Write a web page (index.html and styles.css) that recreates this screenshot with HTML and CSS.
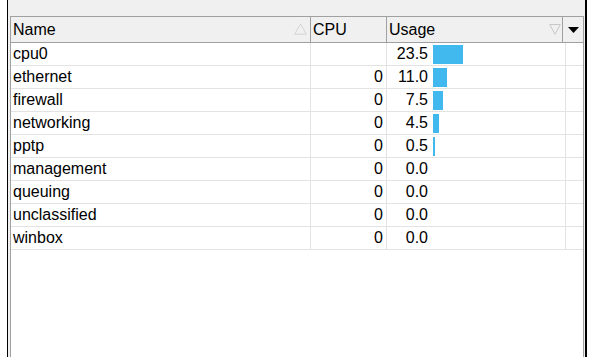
FILE: index.html
```html
<!DOCTYPE html>
<html lang="en">
<head>
  <meta charset="UTF-8">
  <title>Profile</title>
  <link rel="stylesheet" href="styles.css">
</head>
<body>
  <div class="frame">
    <div class="grid">
      <div class="head">
        <div class="hcell name">Name
          <svg class="sort" width="13" height="12" viewBox="0 0 13 12"><path d="M6.5 0.8 L12.3 11.2 L0.7 11.2 Z" fill="none" stroke="#d4d4d4"/></svg>
        </div>
        <div class="hcell">CPU</div>
        <div class="hcell usage">Usage
          <svg class="sort" width="12" height="11" viewBox="0 0 12 11"><path d="M0.7 0.5 L11.3 0.5 L6 10.3 Z" fill="none" stroke="#c8c8c8"/></svg>
        </div>
        <div class="hcell menu">
          <svg width="11" height="6" viewBox="0 0 11 6"><path d="M0 0 L11 0 L5.5 6 Z" fill="#000"/></svg>
        </div>
      </div>

      <div class="rows" id="rows"></div>
    </div>
  </div>

  <script>
    const data = [
      ["cpu0", "", 23.5],
      ["ethernet", "0", 11.0],
      ["firewall", "0", 7.5],
      ["networking", "0", 4.5],
      ["pptp", "0", 0.5],
      ["management", "0", 0.0],
      ["queuing", "0", 0.0],
      ["unclassified", "0", 0.0],
      ["winbox", "0", 0.0]
    ];

    let html = "";
    data.forEach(function (r) {
      let w = Math.round(r[2] * 1.27);
      if (r[2] > 0 && w < 2) w = 2;
      html += "<div class='row'>";
      html += "<div class='cell name'>" + r[0] + "</div>";
      html += "<div class='cell cpu'>" + r[1] + "</div>";
      html += "<div class='cell usage'><span class='num'>" + r[2].toFixed(1) + "</span>";
      if (w > 0) html += "<span class='bar' style='width:" + w + "px'></span>";
      html += "</div>";
      html += "<div class='cell last'></div>";
      html += "</div>";
    });
    document.getElementById("rows").innerHTML = html;
  </script>
</body>
</html>
```

FILE: styles.css
```css
body { margin: 0; background: #fff; font-family: "Liberation Sans", Arial, sans-serif; font-size: 16px; color: #000; }

.frame { margin-left: 7px; width: 580px; height: 357px; box-sizing: border-box; border-left: 1px solid #000; border-right: 2px solid #000; padding: 16px 1px 0 2px; background: #f0f0f0; }
.grid { height: 100%; box-sizing: border-box; border: 1px solid #a0a0a0; border-bottom: none; background: #fff; }

.head { display: grid; grid-template-columns: 300px 76px 176px 20px; height: 26px; box-sizing: border-box; border-bottom: 1px solid #a0a0a0; background: #f0f0f0; }
.hcell { display: flex; align-items: center; padding-left: 2px; border-right: 1px solid #a0a0a0; line-height: 25px; }
.hcell.menu { border-right: none; justify-content: center; padding: 0 0 0 1px; }
.hcell .sort { margin-left: auto; margin-right: 4px; }
.hcell.name .sort { margin-right: 3px; margin-top: -2px; }
.hcell.usage .sort { margin-right: 1px; }

.row { display: grid; grid-template-columns: 300px 76px 179px 17px; height: 23px; box-sizing: border-box; border-bottom: 1px solid #e3e3e3; }
.cell { border-right: 1px solid #e3e3e3; line-height: 22px; padding-left: 2px; white-space: nowrap; }
.cell.cpu { text-align: right; padding: 0 3px 0 0; }
.cell.usage { display: flex; align-items: center; padding: 0; }
.cell.last { border-right: none; }
.num { width: 41px; text-align: right; }
.bar { height: 19px; margin-left: 5px; background: #41b9ee; }
```
